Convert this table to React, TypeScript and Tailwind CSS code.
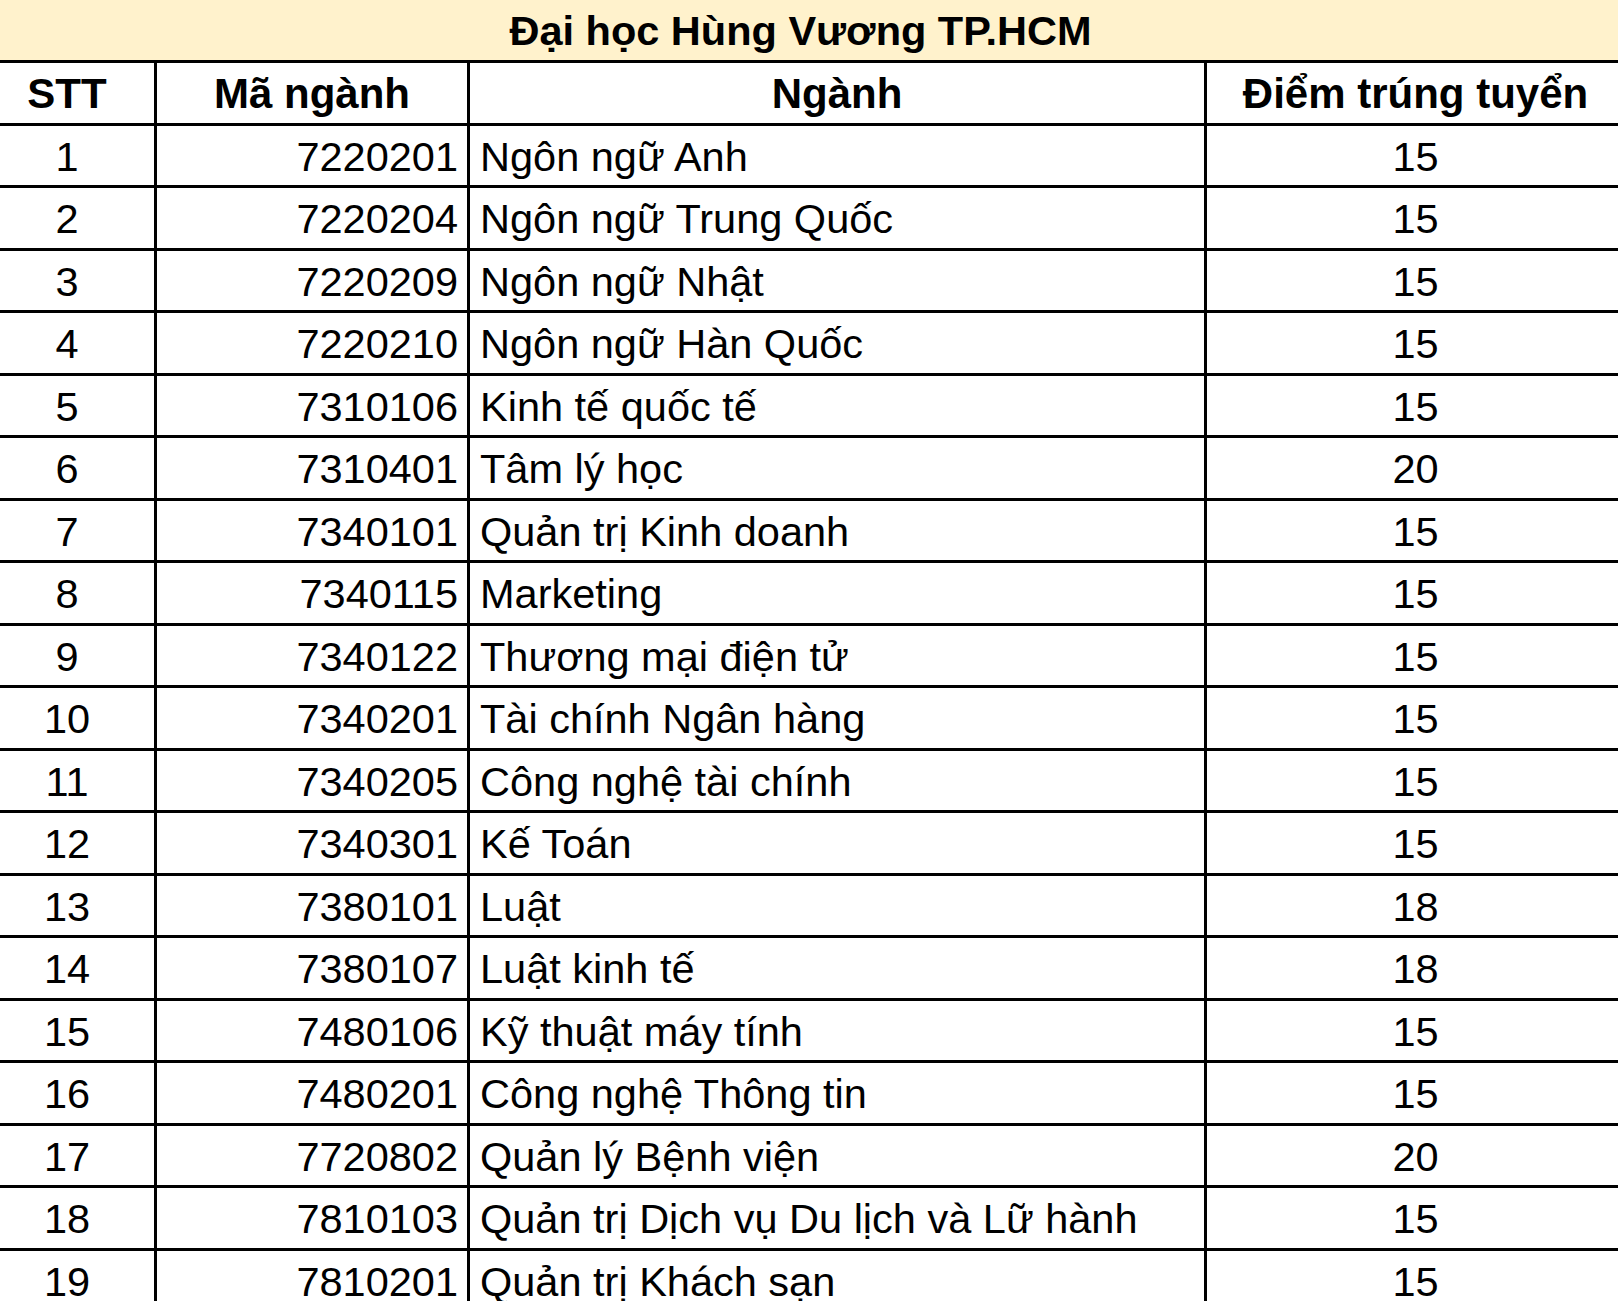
import React from "react";

const rows: [string, string, string, string][] = [
  ["1", "7220201", "Ngôn ngữ Anh", "15"],
  ["2", "7220204", "Ngôn ngữ Trung Quốc", "15"],
  ["3", "7220209", "Ngôn ngữ Nhật", "15"],
  ["4", "7220210", "Ngôn ngữ Hàn Quốc", "15"],
  ["5", "7310106", "Kinh tế quốc tế", "15"],
  ["6", "7310401", "Tâm lý học", "20"],
  ["7", "7340101", "Quản trị Kinh doanh", "15"],
  ["8", "7340115", "Marketing", "15"],
  ["9", "7340122", "Thương mại điện tử", "15"],
  ["10", "7340201", "Tài chính Ngân hàng", "15"],
  ["11", "7340205", "Công nghệ tài chính", "15"],
  ["12", "7340301", "Kế Toán", "15"],
  ["13", "7380101", "Luật", "18"],
  ["14", "7380107", "Luật kinh tế", "18"],
  ["15", "7480106", "Kỹ thuật máy tính", "15"],
  ["16", "7480201", "Công nghệ Thông tin", "15"],
  ["17", "7720802", "Quản lý Bệnh viện", "20"],
  ["18", "7810103", "Quản trị Dịch vụ Du lịch và Lữ hành", "15"],
  ["19", "7810201", "Quản trị Khách sạn", "15"],
];

const cols = "grid grid-cols-[157px_313px_737px_1fr]";

export default function App() {
  return (
    <div
      className="w-[1618px] h-[1301px] overflow-hidden bg-white text-black"
      style={{ fontFamily: '"Liberation Sans", Arial, sans-serif' }}
    >
      <div className="h-[63px] bg-[#fff2cc] border-b-[3px] border-black flex items-center justify-center text-[41.5px] font-bold leading-none pt-[2px] pr-[17px]">
        Đại học Hùng Vương TP.HCM
      </div>
      <div className={`${cols} h-[62.5px] border-b-[3px] border-black text-[42px] font-bold leading-none`}>
        <div className="border-r-[3px] border-black flex items-center justify-center pr-[20px] pt-[3px]">STT</div>
        <div className="border-r-[3px] border-black flex items-center justify-center pt-[3px]">Mã ngành</div>
        <div className="border-r-[3px] border-black flex items-center justify-center pt-[3px]">Ngành</div>
        <div className="flex items-center justify-center pl-[6px] pt-[3px]">Điểm trúng tuyển</div>
      </div>
      {rows.map((r) => (
        <div
          key={r[0]}
          className={`${cols} h-[62.5px] shrink-0 border-b-[3px] border-black text-[41.5px] leading-none`}
        >
          <div className="border-r-[3px] border-black flex items-center justify-center pr-[20px] pt-[2px]">{r[0]}</div>
          <div className="border-r-[3px] border-black flex items-center justify-end pr-[9px] pt-[2px]">{r[1]}</div>
          <div className="border-r-[3px] border-black flex items-center justify-start pl-[10px] pt-[2px] whitespace-nowrap">{r[2]}</div>
          <div className="flex items-center justify-center pl-[6px] pt-[2px]">{r[3]}</div>
        </div>
      ))}
    </div>
  );
}
